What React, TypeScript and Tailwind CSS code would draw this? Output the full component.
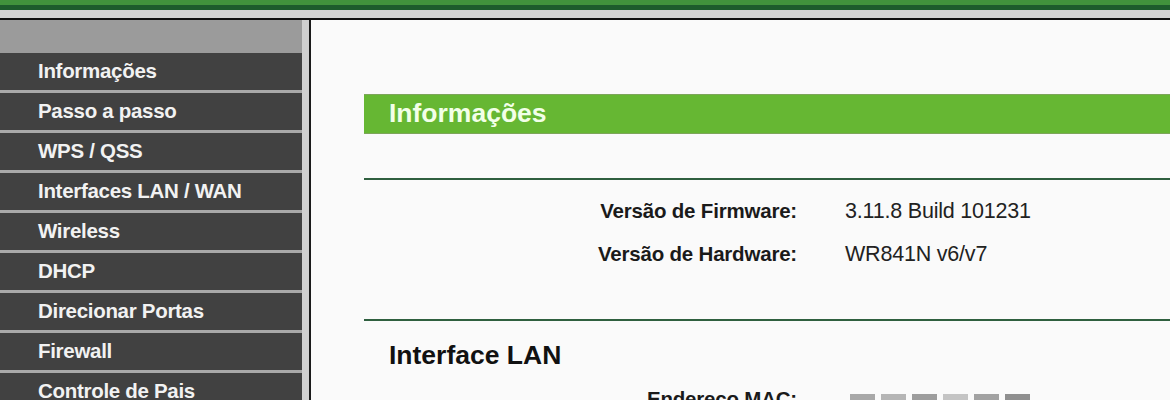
const menu = [
  "Informações",
  "Passo a passo",
  "WPS / QSS",
  "Interfaces LAN / WAN",
  "Wireless",
  "DHCP",
  "Direcionar Portas",
  "Firewall",
  "Controle de Pais",
  "Controle de Acesso",
];

function Row({ label, value }: { label: string; value: string }) {
  return (
    <div className="flex h-[43px] items-center">
      <div className="w-[534px] shrink-0 pr-[48px] text-right text-[20.5px] font-bold tracking-[-0.2px] text-[#1a1a1a]">{label}</div>
      <div className="text-[21.5px] tracking-[-0.2px] text-[#222]">{value}</div>
    </div>
  );
}

export default function App() {
  return (
    <div className="h-[400px] w-[1170px] overflow-hidden bg-[#fafafa] font-['Liberation_Sans',Arial,sans-serif]">
      <div className="h-[5px] bg-[#41923c]" />
      <div className="h-[5px] bg-[#1d5b2c]" />
      <div className="h-[8px] bg-[#d3d3d3]" />
      <div className="h-[2px] bg-[#111]" />
      <div className="flex">
        <aside className="flex w-[311px] shrink-0 border-r-2 border-[#1a1a1a] bg-[#d0d0d0]">
          <div className="w-[302px]">
            <div className="h-[33px] bg-[#9b9b9b]" />
            {menu.map((m) => (
              <div key={m} className="border-b-[3px] border-[#a9a9a9]">
                <div className="flex h-[37px] items-center bg-[#414141] pl-[38px] text-[20.5px] font-bold tracking-[-0.3px] text-[#f2f2f2]">
                  {m}
                </div>
              </div>
            ))}
          </div>
        </aside>
        <main className="flex-1 pl-[53px]">
          <div className="h-[74px]" />
          <div className="flex h-[40px] items-center border-y border-[#7da55a] bg-[#66b733] pl-[25px] text-[26.5px] font-bold text-[#f2ffe8]">
            Informações
          </div>
          <div className="h-[44px]" />
          <div className="h-[2px] bg-[#2f5f3f]" />
          <div className="-ml-[53px] pt-[10px]">
            <Row label="Versão de Firmware:" value="3.11.8 Build 101231" />
            <Row label="Versão de Hardware:" value="WR841N v6/v7" />
          </div>
          <div className="h-[43px]" />
          <div className="h-[2px] bg-[#2f5f3f]" />
          <div className="flex h-[70px] items-center pl-[25px] text-[26.5px] font-bold text-[#111]">
            Interface LAN
          </div>
          <div className="-ml-[53px] -mt-[7px] flex items-start">
            <div className="w-[534px] shrink-0 pr-[48px] text-right text-[20.5px] font-bold tracking-[-0.2px] text-[#1a1a1a]">
              Endereço MAC:
            </div>
            <div className="mt-[10px] flex gap-[6px] pl-[5px]">
              {["#a8a8a8", "#b5b5b5", "#9d9d9d", "#c4c4c4", "#a2a2a2", "#8f8f8f"].map((c, i) => (
                <div key={i} className="h-[14px] w-[25px]" style={{ background: c }} />
              ))}
            </div>
          </div>
        </main>
      </div>
    </div>
  );
}
